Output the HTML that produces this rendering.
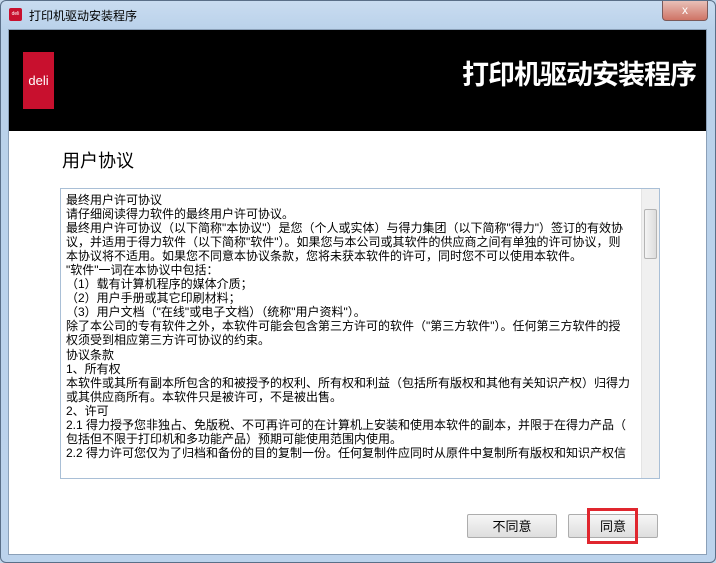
<!DOCTYPE html>
<html><head><meta charset="utf-8"><style>
body{margin:0;width:716px;height:563px;overflow:hidden;background:#c4d8ec;font-family:"Liberation Sans","Noto Sans CJK SC",sans-serif;position:relative}
.frame{position:absolute;left:0;top:0;width:714px;height:561px;border:1px solid #5a6f88;border-radius:6px;background:linear-gradient(#c9dcf0,#b9d1ea 30px,#bcd3ec);}
.title{position:absolute;left:29px;top:7px;font-size:12px;color:#000}
.ico{position:absolute;left:9px;top:8px;width:13px;height:13px;background:#c8102e;border-radius:2px;color:#fff;font-size:5px;line-height:13px;text-align:center}
.close{position:absolute;left:662px;top:1px;width:44px;height:19px;border:1px solid #7a5a5a;border-top:none;border-radius:0 0 4px 4px;background:linear-gradient(#e8c0b8,#cf7466);color:#fff;font-size:12px;text-align:center;line-height:18px}
.inner{position:absolute;left:8px;top:29px;width:699px;height:526px;background:#fff;border:1px solid #8ba0b8;box-sizing:border-box}
.banner{position:absolute;left:0;top:0;width:100%;height:101px;background:#000}
.logo{position:absolute;left:14px;top:22px;width:31px;height:57px;background:#c8102e;color:#fff;font-size:13px;line-height:57px;text-align:center}
.bt{position:absolute;right:10px;top:23px;color:#fff;font-weight:bold;font-size:27px;letter-spacing:-1px}
.h{position:absolute;left:53px;top:117px;font-size:18px;color:#000}
.box{position:absolute;left:51px;top:158px;width:600px;height:291px;border:1px solid #a9bfd6;box-sizing:border-box;overflow:hidden}
.txt{position:absolute;left:5px;top:4px;width:575px;height:266px;overflow:hidden;font-size:12px;line-height:14.05px;color:#000;white-space:nowrap}
.sb{position:absolute;right:0;top:0;width:17px;height:100%;background:#f0f0f0;border-left:1px solid #e4e4e4}
.th{position:absolute;left:2px;top:20px;width:11px;height:48px;border:1px solid #b4b4b4;border-radius:2px;background:linear-gradient(90deg,#f4f4f4,#dcdcdc)}
.btn{position:absolute;top:484px;width:90px;height:24px;border:1px solid #adadad;border-radius:2px;background:linear-gradient(#f6f6f6,#dedede);font-size:13px;text-align:center;line-height:24px;box-sizing:border-box}
.red{position:absolute;left:578px;top:478px;width:51px;height:36px;border:3px solid #e0262e;box-sizing:border-box}
</style></head><body>
<div class="frame"></div>
<div class="ico">deli</div>
<div class="title">打印机驱动安装程序</div>
<div class="close">x</div>
<div class="inner">
<div class="banner"><div class="logo">deli</div><div class="bt">打印机驱动安装程序</div></div>
<div class="h">用户协议</div>
<div class="box"><div class="txt">最终用户许可协议<br>请仔细阅读得力软件的最终用户许可协议。<br>最终用户许可协议（以下简称"本协议"）是您（个人或实体）与得力集团（以下简称"得力"）签订的有效协<br>议，并适用于得力软件（以下简称"软件"）。如果您与本公司或其软件的供应商之间有单独的许可协议，则<br>本协议将不适用。如果您不同意本协议条款，您将未获本软件的许可，同时您不可以使用本软件。<br>"软件"一词在本协议中包括：<br>（1）载有计算机程序的媒体介质；<br>（2）用户手册或其它印刷材料；<br>（3）用户文档（"在线"或电子文档）（统称"用户资料"）。<br>除了本公司的专有软件之外，本软件可能会包含第三方许可的软件（"第三方软件"）。任何第三方软件的授<br>权须受到相应第三方许可协议的约束。<br>协议条款<br>1、所有权<br>本软件或其所有副本所包含的和被授予的权利、所有权和利益（包括所有版权和其他有关知识产权）归得力<br>或其供应商所有。本软件只是被许可，不是被出售。<br>2、许可<br>2.1 得力授予您非独占、免版税、不可再许可的在计算机上安装和使用本软件的副本，并限于在得力产品（<br>包括但不限于打印机和多功能产品）预期可能使用范围内使用。<br>2.2 得力许可您仅为了归档和备份的目的复制一份。任何复制件应同时从原件中复制所有版权和知识产权信<br>息。</div><div class="sb"><div class="th"></div></div></div>
<div class="btn" style="left:458px">不同意</div>
<div class="btn" style="left:559px">同意</div>
<div class="red"></div>
</div>
</body></html>
